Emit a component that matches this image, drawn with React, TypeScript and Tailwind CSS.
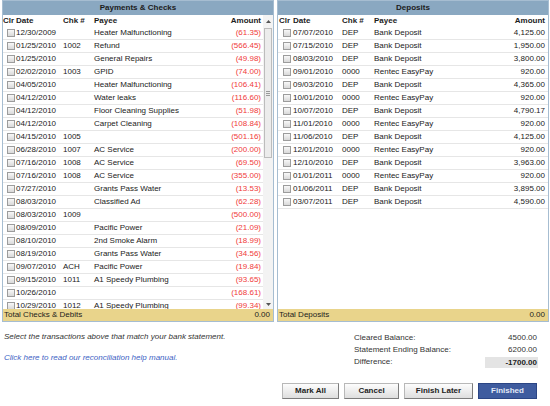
import React from 'react';

type Row = { date: string; chk: string; payee: string; amount: string };

const payments: Row[] = [
  { date: '12/30/2009', chk: '', payee: 'Heater Malfunctioning', amount: '(61.35)' },
  { date: '01/25/2010', chk: '1002', payee: 'Refund', amount: '(566.45)' },
  { date: '01/25/2010', chk: '', payee: 'General Repairs', amount: '(49.98)' },
  { date: '02/02/2010', chk: '1003', payee: 'GPID', amount: '(74.00)' },
  { date: '04/05/2010', chk: '', payee: 'Heater Malfunctioning', amount: '(106.41)' },
  { date: '04/12/2010', chk: '', payee: 'Water leaks', amount: '(116.60)' },
  { date: '04/12/2010', chk: '', payee: 'Floor Cleaning Supplies', amount: '(51.98)' },
  { date: '04/12/2010', chk: '', payee: 'Carpet Cleaning', amount: '(108.84)' },
  { date: '04/15/2010', chk: '1005', payee: '', amount: '(501.16)' },
  { date: '06/28/2010', chk: '1007', payee: 'AC Service', amount: '(200.00)' },
  { date: '07/16/2010', chk: '1008', payee: 'AC Service', amount: '(69.50)' },
  { date: '07/16/2010', chk: '1008', payee: 'AC Service', amount: '(355.00)' },
  { date: '07/27/2010', chk: '', payee: 'Grants Pass Water', amount: '(13.53)' },
  { date: '08/03/2010', chk: '', payee: 'Classified Ad', amount: '(62.28)' },
  { date: '08/03/2010', chk: '1009', payee: '', amount: '(500.00)' },
  { date: '08/09/2010', chk: '', payee: 'Pacific Power', amount: '(21.09)' },
  { date: '08/10/2010', chk: '', payee: '2nd Smoke Alarm', amount: '(18.99)' },
  { date: '08/19/2010', chk: '', payee: 'Grants Pass Water', amount: '(34.56)' },
  { date: '09/07/2010', chk: 'ACH', payee: 'Pacific Power', amount: '(19.84)' },
  { date: '09/15/2010', chk: '1011', payee: 'A1 Speedy Plumbing', amount: '(93.65)' },
  { date: '10/26/2010', chk: '', payee: '', amount: '(168.61)' },
  { date: '10/29/2010', chk: '1012', payee: 'A1 Speedy Plumbing', amount: '(99.34)' },
];

const deposits: Row[] = [
  { date: '07/07/2010', chk: 'DEP', payee: 'Bank Deposit', amount: '4,125.00' },
  { date: '07/15/2010', chk: 'DEP', payee: 'Bank Deposit', amount: '1,950.00' },
  { date: '08/03/2010', chk: 'DEP', payee: 'Bank Deposit', amount: '3,800.00' },
  { date: '09/01/2010', chk: '0000', payee: 'Rentec EasyPay', amount: '920.00' },
  { date: '09/03/2010', chk: 'DEP', payee: 'Bank Deposit', amount: '4,365.00' },
  { date: '10/01/2010', chk: '0000', payee: 'Rentec EasyPay', amount: '920.00' },
  { date: '10/07/2010', chk: 'DEP', payee: 'Bank Deposit', amount: '4,790.17' },
  { date: '11/01/2010', chk: '0000', payee: 'Rentec EasyPay', amount: '920.00' },
  { date: '11/06/2010', chk: 'DEP', payee: 'Bank Deposit', amount: '4,125.00' },
  { date: '12/01/2010', chk: '0000', payee: 'Rentec EasyPay', amount: '920.00' },
  { date: '12/10/2010', chk: 'DEP', payee: 'Bank Deposit', amount: '3,963.00' },
  { date: '01/01/2011', chk: '0000', payee: 'Rentec EasyPay', amount: '920.00' },
  { date: '01/06/2011', chk: 'DEP', payee: 'Bank Deposit', amount: '3,895.00' },
  { date: '03/07/2011', chk: 'DEP', payee: 'Bank Deposit', amount: '4,590.00' },
];

function Checkbox() {
  return (
    <span className="block h-[8px] w-[8px] border border-[#9c9c9c] bg-linear-to-b from-[#f8f8f8] to-[#d9d9d9]" />
  );
}

function Scrollbar() {
  return (
    <div className="flex w-[10px] flex-col bg-[#f3f3f3]">
      <div className="flex h-[12px] items-center justify-center">
        <svg width="5" height="3" viewBox="0 0 5 3" aria-hidden="true">
          <path d="M0 3 L2.5 0 L5 3 Z" fill="#555" />
        </svg>
      </div>
      <div className="flex flex-1 flex-col px-[1px]">
        <div className="mt-[1px] flex h-[130px] flex-col items-center justify-center gap-[1px] border border-[#bcbcbc] bg-[#ececec]">
          <span className="block h-px w-[4px] bg-[#9a9a9a]" />
          <span className="block h-px w-[4px] bg-[#9a9a9a]" />
          <span className="block h-px w-[4px] bg-[#9a9a9a]" />
        </div>
      </div>
      <div className="flex h-[9px] items-center justify-center">
        <svg width="5" height="3" viewBox="0 0 5 3" aria-hidden="true">
          <path d="M0 0 L2.5 3 L5 0 Z" fill="#555" />
        </svg>
      </div>
    </div>
  );
}

interface PanelProps {
  title: string;
  rows: Row[];
  cols: string;
  totalLabel: string;
  scroll?: boolean;
  amountClass: string;
  pad: string;
}

function Panel({ title, rows, cols, totalLabel, scroll, amountClass, pad }: PanelProps) {
  return (
    <div className="flex h-[322px] w-[272px] flex-col border border-[#a6bdd1]">
      <div className="h-[14px] bg-[#8aa8c1] text-center font-bold leading-[14px] text-[#1c1c1c]">
        {title}
      </div>
      <div className="flex min-h-0 flex-1">
        <div className="flex min-w-0 flex-1 flex-col">
          <div className={`grid h-[12px] items-center font-bold text-[#1c1c1c] ${cols} ${pad}`}>
            <span className="whitespace-nowrap">Clr</span>
            <span>Date</span>
            <span>Chk #</span>
            <span>Payee</span>
            <span className="text-right">Amount</span>
          </div>
          <div className="min-h-0 flex-1 overflow-hidden">
            {rows.map((r, i) => (
              <div
                key={i}
                className={`grid h-[13px] items-center border-b border-[#e6e6e6] text-[#222] ${cols} ${pad}`}
              >
                <span className="pl-[4px]">
                  <Checkbox />
                </span>
                <span>{r.date}</span>
                <span>{r.chk}</span>
                <span className="whitespace-nowrap">{r.payee}</span>
                <span className={`text-right ${amountClass}`}>{r.amount}</span>
              </div>
            ))}
          </div>
        </div>
        {scroll && <Scrollbar />}
      </div>
      <div className="flex h-[12px] items-center justify-between bg-[#e9d48b] px-[1px] text-[#1c1c1c]">
        <span>{totalLabel}</span>
        <span className="pr-[2px]">0.00</span>
      </div>
    </div>
  );
}

function Button({ label, primary, w }: { label: string; primary?: boolean; w: string }) {
  return (
    <button
      type="button"
      className={
        primary
          ? `h-[16px] ${w} border border-[#2b4584] bg-[#3f5c9f] text-center font-bold text-[#e3e9f7]`
          : `h-[16px] ${w} border border-[#b8b8b8] border-r-[#7c7c7c] border-b-[#7c7c7c] bg-linear-to-b from-[#fdfdfd] to-[#dedede] text-center font-bold text-[#222]`
      }
    >
      {label}
    </button>
  );
}

export default function App() {
  return (
    <div className="h-[406px] w-[550px] overflow-hidden bg-white font-['Liberation_Sans',Arial,sans-serif] text-[8px] leading-none">
      <div className="flex gap-[3px] pl-[2px]">
        <Panel
          title="Payments & Checks"
          rows={payments}
          cols="grid-cols-[13px_47px_31px_1fr_auto]"
          pad="pr-[2px]"
          totalLabel="Total Checks & Debits"
          amountClass="text-[#f03a3a]"
          scroll
        />
        <Panel
          title="Deposits"
          rows={deposits}
          cols="grid-cols-[14px_49px_32px_1fr_auto]"
          pad="pr-[3px] pl-[1px]"
          totalLabel="Total Deposits"
          amountClass="text-[#222]"
        />
      </div>

      <div className="flex">
        <div className="flex flex-1 flex-col pl-[4px] italic">
          <p className="mt-[10px] leading-[10px] text-[#333]">
            Select the transactions above that match your bank statement.
          </p>
          <a href="#" className="mt-[11px] leading-[10px] text-[#3d5fc4]">
            Click here to read our reconciliation help manual.
          </a>
        </div>
        <div className="mr-[12px] mt-[10px] grid w-[184px] grid-cols-[1fr_auto] text-[#333]">
          <span className="h-[12px] leading-[12px]">Cleared Balance:</span>
          <span className="h-[12px] pr-[1px] text-right leading-[12px]">4500.00</span>
          <span className="h-[12px] leading-[12px]">Statement Ending Balance:</span>
          <span className="h-[12px] pr-[1px] text-right leading-[12px]">6200.00</span>
          <span className="h-[12px] leading-[12px]">Difference:</span>
          <span className="flex h-[12px] items-center">
            <span className="h-[11px] w-[53px] bg-[#e4e4e4] pr-[1px] text-right font-bold leading-[11px] text-[#222]">
              -1700.00
            </span>
          </span>
        </div>
      </div>

      <div className="mt-[15px] flex justify-end gap-[5px] pr-[13px]">
        <Button label="Mark All" w="w-[57px]" />
        <Button label="Cancel" w="w-[55px]" />
        <Button label="Finish Later" w="w-[69px]" />
        <Button label="Finished" w="w-[59px]" primary />
      </div>
    </div>
  );
}
